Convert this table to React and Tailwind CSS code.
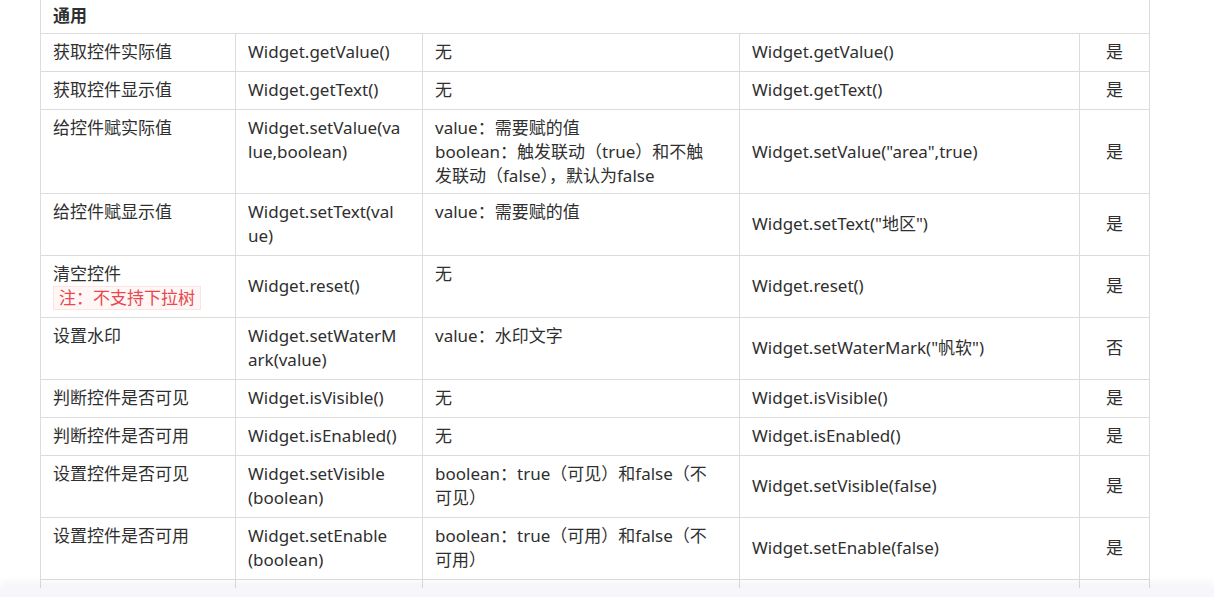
const rows = [
  { name: '获取控件实际值', api: ['Widget.getValue()'], desc: ['无'], example: 'Widget.getValue()', ok: '是' },
  { name: '获取控件显示值', api: ['Widget.getText()'], desc: ['无'], example: 'Widget.getText()', ok: '是' },
  {
    name: '给控件赋实际值',
    api: ['Widget.setValue(va', 'lue,boolean)'],
    desc: ['value：需要赋的值', 'boolean：触发联动（true）和不触', '发联动（false），默认为false'],
    example: 'Widget.setValue("area",true)',
    ok: '是',
    tight: true,
  },
  { name: '给控件赋显示值', api: ['Widget.setText(val', 'ue)'], desc: ['value：需要赋的值'], example: 'Widget.setText("地区")', ok: '是' },
  { name: '清空控件', note: '注：不支持下拉树', api: ['Widget.reset()'], desc: ['无'], example: 'Widget.reset()', ok: '是', apiMiddle: true },
  { name: '设置水印', api: ['Widget.setWaterM', 'ark(value)'], desc: ['value：水印文字'], example: 'Widget.setWaterMark("帆软")', ok: '否' },
  { name: '判断控件是否可见', api: ['Widget.isVisible()'], desc: ['无'], example: 'Widget.isVisible()', ok: '是' },
  { name: '判断控件是否可用', api: ['Widget.isEnabled()'], desc: ['无'], example: 'Widget.isEnabled()', ok: '是' },
  {
    name: '设置控件是否可见',
    api: ['Widget.setVisible', '(boolean)'],
    desc: ['boolean：true（可见）和false（不', '可见）'],
    example: 'Widget.setVisible(false)',
    ok: '是',
  },
  {
    name: '设置控件是否可用',
    api: ['Widget.setEnable', '(boolean)'],
    desc: ['boolean：true（可用）和false（不', '可用）'],
    example: 'Widget.setEnable(false)',
    ok: '是',
  },
];

function Lines({ items }) {
  return items.map((t, i) => (
    <div key={i} className="whitespace-nowrap">{t}</div>
  ));
}

export default function App() {
  const base = 'border border-[#dcdcdc] px-3 pt-[6px] leading-[24px]';

  return (
    <div
      className="relative h-[597px] overflow-hidden bg-white text-[17px] text-[#2f2f2f]"
      style={{ fontFamily: '"Noto Sans", "Noto Sans CJK SC", sans-serif' }}
    >
      <div className="pl-[40px]">
        <table className="border-collapse table-fixed w-[1109px]">
          <colgroup>
            <col className="w-[195px]" />
            <col className="w-[187px]" />
            <col className="w-[317px]" />
            <col className="w-[340px]" />
            <col className="w-[70px]" />
          </colgroup>
          <tbody>
            {/* group header */}
            <tr className="h-[33px]">
              <td colSpan={5} className="border border-[#dcdcdc] border-t-0 px-3 font-bold align-middle leading-[24px]">通用</td>
            </tr>

            {rows.map((r, i) => {
              const cell = `${base} ${r.tight ? 'pb-[5px]' : 'pb-[7px]'}`;
              return (
                <tr key={i}>
                  <td className={`${cell} align-top`}>
                    <div>{r.name}</div>
                    {r.note && (
                      <span className="inline-block border border-[#fde3e3] bg-[#fff6f6] px-[5px] text-[#e9474d] leading-[22px]">
                        {r.note}
                      </span>
                    )}
                  </td>
                  <td className={`${cell} ${r.apiMiddle ? 'align-middle' : 'align-top'}`}>
                    <Lines items={r.api} />
                  </td>
                  <td className={`${cell} align-top`}>
                    <Lines items={r.desc} />
                  </td>
                  <td className={`${cell} align-middle whitespace-nowrap`}>{r.example}</td>
                  <td className={`${cell} align-middle text-center`}>{r.ok}</td>
                </tr>
              );
            })}

            <tr className="h-[40px]">
              <td className={base}></td>
              <td className={base}></td>
              <td className={base}></td>
              <td className={base}></td>
              <td className={base}></td>
            </tr>
          </tbody>
        </table>
      </div>

      {/* bottom bar overlay */}
      <div className="absolute bottom-0 left-0 right-0 h-[9px] bg-[#f6f7fb] shadow-[0_-6px_8px_rgba(0,0,0,0.05)]"></div>
    </div>
  );
}
